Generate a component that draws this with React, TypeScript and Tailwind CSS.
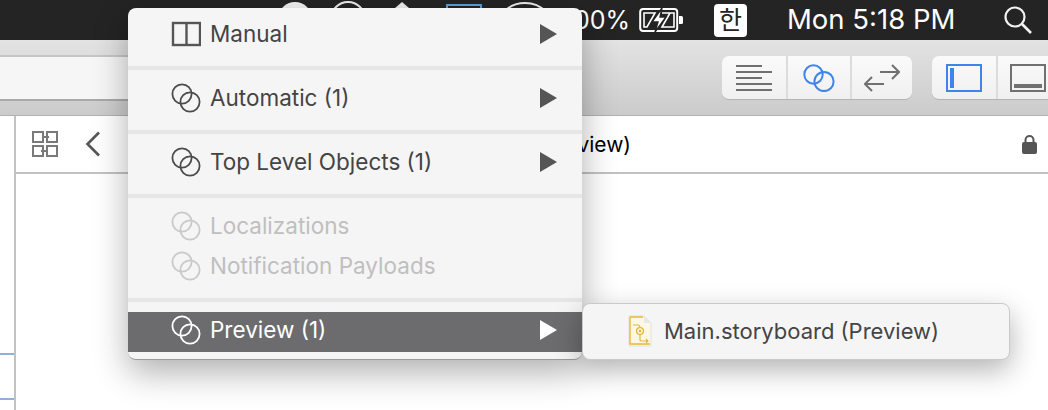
import type { ReactNode } from 'react'

const font = { fontFamily: 'Inter, "Noto Sans CJK KR", sans-serif' }

function Rings({ className = 'text-[#4c4c4c]' }: { className?: string }) {
  return (
    <svg width="30" height="30" viewBox="0 0 30 30" fill="none" stroke="currentColor" strokeWidth="1.8" className={className}>
      <circle cx="11" cy="11" r="9.6" />
      <circle cx="19" cy="19" r="9.6" />
    </svg>
  )
}

function SplitIcon() {
  return (
    <svg width="30" height="30" viewBox="0 0 30 30" fill="none" stroke="#555" strokeWidth="2.4">
      <rect x="2" y="4" width="27" height="22" />
      <path d="M15.5 4v22" />
    </svg>
  )
}

function MenuRow({
  icon,
  label,
  arrow = true,
  tone = 'text-[#444]',
  arrowColor = '#555',
  active = false,
  className = '',
}: {
  icon: ReactNode
  label: string
  arrow?: boolean
  tone?: string
  arrowColor?: string
  active?: boolean
  className?: string
}) {
  return (
    <div className={`flex h-10 items-center pl-[43px] pr-[25px] ${active ? 'bg-[#6c6c6e]' : ''} ${tone} ${className}`}>
      <div className="w-[39px] shrink-0">{icon}</div>
      <span className="flex-1 text-[22.5px] leading-none">{label}</span>
      {arrow && (
        <svg width="17" height="20" viewBox="0 0 17 20">
          <path d="M0 0L17 10L0 20Z" fill={arrowColor} />
        </svg>
      )}
    </div>
  )
}

function Separator() {
  return <div className="mb-2 mt-3 h-1 bg-[#e6e6e6]" />
}

function StoryboardIcon() {
  return (
    <svg width="24" height="32" viewBox="0 0 24 32" fill="none">
      <path d="M1 1H16L23 8V31H1Z" fill="#fdf8e6" stroke="#e3e1d8" />
      <path d="M16 1V8H23Z" fill="#e8e8e8" />
      <path d="M2 2H15M2 2V29H22M2 2V29" stroke="#e5b83a" strokeWidth="1.4" />
      <path d="M5 10H10Q12 10 12 13M12 20V25Q12 26 14 26H20M18 24L20 26L18 28" stroke="#e5b83a" strokeWidth="1.2" />
      <circle cx="12" cy="16" r="3.4" stroke="#e5b83a" strokeWidth="1.4" />
      <circle cx="12" cy="16" r="1.3" fill="#e5b83a" />
    </svg>
  )
}

function Segment({ children, last = false, className = '' }: { children: ReactNode; last?: boolean; className?: string }) {
  return (
    <div className={`flex h-full items-center justify-center ${last ? '' : 'border-r-2 border-[#dcdcdc]'} ${className}`}>
      {children}
    </div>
  )
}

function StatusIcons() {
  return (
    <svg width="300" height="40" viewBox="0 0 300 40" fill="none" className="shrink-0">
      <circle cx="35" cy="19" r="17" fill="#f2f2f2" />
      <circle cx="88" cy="19" r="17" stroke="#eee" strokeWidth="2" />
      <path d="M142 2L156 14H128Z" fill="#eee" />
      <rect x="187" y="5" width="34" height="26" stroke="#5a9fe6" strokeWidth="2" />
      <circle cx="265" cy="33" r="30" stroke="#eee" strokeWidth="2" />
    </svg>
  )
}

export default function App() {
  return (
    <div className="relative h-[410px] w-[1048px] overflow-hidden bg-white" style={font}>
      {/* menu bar */}
      <div className="flex h-10 items-center bg-[#242424] pl-[260px] text-white">
        <StatusIcons />
        <span className="w-[70px] shrink-0 text-right text-[25px] leading-none">100%</span>
        <svg width="45" height="26" viewBox="0 0 45 26" fill="none" className="ml-[9px] shrink-0">
          <rect x="1.2" y="2" width="37" height="22" rx="3" stroke="white" strokeWidth="2" />
          <path d="M40 9h2.5a1.5 1.5 0 0 1 1.5 1.5v5a1.5 1.5 0 0 1-1.5 1.5H40Z" fill="white" />
          <path d="M5 20V6h11L8 20ZM23 6h12v14H23L31 6" stroke="white" strokeWidth="1.6" />
          <path d="M23 1L13 15h6l-3 10 11-15h-6Z" fill="white" stroke="#242424" strokeWidth="1.4" />
        </svg>
        <div className="ml-[30px] flex h-[33px] w-[33px] shrink-0 items-center justify-center rounded-[4px] bg-white text-[25px] leading-none text-[#242424]">
          한
        </div>
        <span className="ml-[40px] w-[167px] shrink-0 whitespace-nowrap text-[27.5px] leading-none">Mon 5:18 PM</span>
        <svg width="28" height="28" viewBox="0 0 28 28" fill="none" stroke="#f2f2f2" strokeWidth="2.2" className="ml-[50px] shrink-0">
          <circle cx="11" cy="11" r="9.5" />
          <path d="M18 18L27 27" strokeWidth="2.6" />
        </svg>
      </div>

      {/* toolbar */}
      <div className="flex h-[76px] border-b border-[#b2b2b2] bg-gradient-to-b from-[#e3e3e3] to-[#cbcbcb]">
        <div className="mt-[15px] h-[46px] w-[420px] border-y-2 border-t-[#c6c6c6] border-b-[#a9a9a9] bg-[#f6f6f6]" />
        <div className="ml-[302px] mt-[16px] flex h-[44px] w-[190px] shrink-0 rounded-[7px] border-b border-[#b4b4b4] bg-gradient-to-b from-[#fafafa] to-[#f0f0f0]">
          <Segment className="w-[66px]">
            <svg width="36" height="26" viewBox="0 0 36 26" stroke="#707070" strokeWidth="2">
              <path d="M0 1h26M0 7h36M0 13h26M0 19h36M0 25h36" />
            </svg>
          </Segment>
          <Segment className="w-[64px]">
            <svg width="32" height="28" viewBox="0 0 32 28" fill="none" stroke="#3f84ea" strokeWidth="2">
              <circle cx="10.5" cy="10.5" r="9.2" />
              <circle cx="21" cy="17.5" r="9.6" />
            </svg>
          </Segment>
          <Segment last className="flex-1">
            <svg width="36" height="28" viewBox="0 0 36 28" fill="none" stroke="#707070" strokeWidth="2">
              <path d="M16 8h19M28 1l7 7l-7 7M20 20H1M8 13l-7 7l7 7" />
            </svg>
          </Segment>
        </div>
        <div className="ml-[20px] mt-[16px] flex h-[44px] w-[116px] shrink-0 rounded-l-[7px] border-b border-[#b4b4b4] bg-gradient-to-b from-[#fafafa] to-[#f0f0f0]">
          <Segment className="w-[66px]">
            <svg width="36" height="28" viewBox="0 0 36 28" fill="none">
              <rect x="1" y="1" width="34" height="26" stroke="#3f84ea" strokeWidth="2" />
              <rect x="4" y="4" width="4" height="20" fill="#3f84ea" />
            </svg>
          </Segment>
          <div className="flex h-full flex-1 items-center pl-[12px]">
            <svg width="36" height="28" viewBox="0 0 36 28" fill="none" className="shrink-0">
              <rect x="1" y="1" width="34" height="26" stroke="#707070" strokeWidth="2" />
              <rect x="4" y="20" width="28" height="4" fill="#707070" />
            </svg>
          </div>
        </div>
      </div>

      {/* editor area */}
      <div className="flex h-[294px]">
        <div className="w-[16px] shrink-0 border-r-2 border-[#c2c2c2] pt-[237px]">
          <div className="h-[2px] bg-[#8fb0df]" />
          <div className="mt-[43px] h-[2px] bg-[#8fb0df]" />
        </div>
        <div className="h-[58px] flex-1 border-b-2 border-[#c2c2c2]">
          <div className="flex h-full items-center pl-[15px] pr-[11px] text-[#7a7a7a]">
            <svg width="28" height="28" viewBox="0 0 28 28" fill="none" stroke="#7a7a7a" strokeWidth="2" className="shrink-0">
              <path d="M2 2h10v10H2ZM16 2h10v10H16ZM2 16h10v10H2ZM16 16h10v10H16Z" />
              <path d="M12 7h6M10 21h6" />
            </svg>
            <svg width="16" height="26" viewBox="0 0 16 26" fill="none" stroke="#555" strokeWidth="2.6" className="ml-[26px] shrink-0">
              <path d="M14 1.5L2.5 13L14 24.5" />
            </svg>
            <span className="flex-1 whitespace-nowrap pr-[391px] text-right text-[21px] leading-none text-black">
              Main.storyboard (Preview)
            </span>
            <svg width="15" height="20" viewBox="0 0 15 20" fill="none" className="shrink-0">
              <path d="M3.5 9V6a4 4 0 0 1 8 0v3" stroke="#555" strokeWidth="2" />
              <rect y="8" width="15" height="12" rx="2" fill="#555" />
            </svg>
          </div>
        </div>
      </div>

      {/* context menu */}
      <div className="absolute left-[128px] top-2 h-[352px] w-[454px] rounded-[8px] border-b border-[#9a9a9a] bg-[#f5f5f5] pt-[6px] shadow-[0_12px_34px_rgba(0,0,0,0.32)]">
        <MenuRow icon={<SplitIcon />} label="Manual" />
        <Separator />
        <MenuRow icon={<Rings />} label="Automatic (1)" />
        <Separator />
        <MenuRow icon={<Rings />} label="Top Level Objects (1)" />
        <Separator />
        <MenuRow icon={<Rings className="text-[#c9c9c9]" />} label="Localizations" arrow={false} tone="text-[#bfbfbf]" />
        <MenuRow icon={<Rings className="text-[#c9c9c9]" />} label="Notification Payloads" arrow={false} tone="text-[#bfbfbf]" />
        <Separator />
        <MenuRow
          icon={<Rings className="text-white" />}
          label="Preview (1)"
          tone="text-white"
          arrowColor="#fff"
          active
          className="mt-[10px] pb-1"
        />
      </div>

      {/* submenu */}
      <div className="absolute left-[582px] top-[303px] flex h-[57px] w-[428px] items-center rounded-[8px] border border-[#c9c9c9] bg-[#f5f5f5] pb-[2px] pl-[45px] text-[#444] shadow-[0_10px_28px_rgba(0,0,0,0.3)]">
        <StoryboardIcon />
        <span className="ml-[12px] text-[22px] leading-none">Main.storyboard (Preview)</span>
      </div>
    </div>
  )
}
